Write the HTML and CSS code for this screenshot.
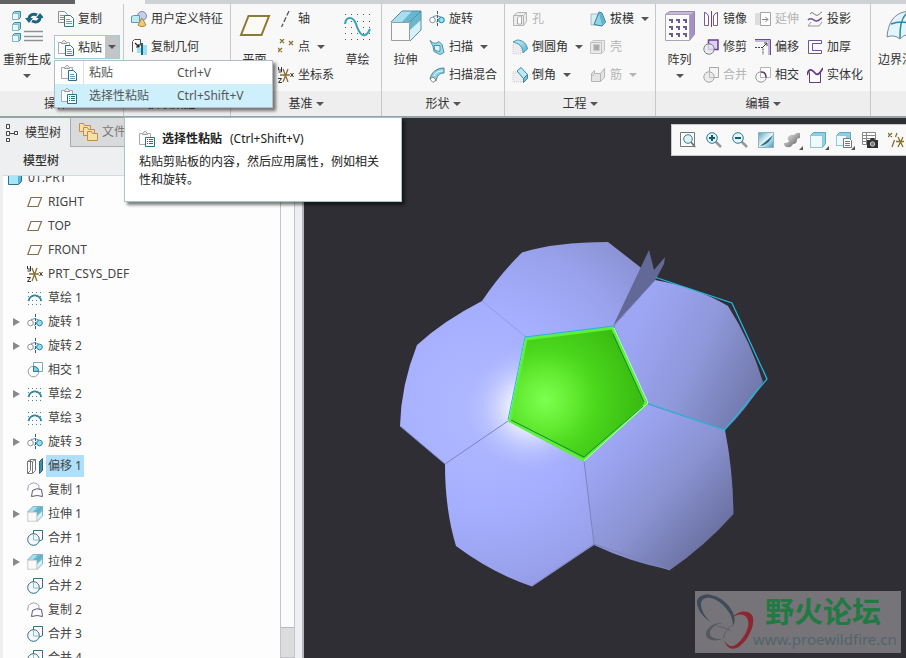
FILE: index.html
```
<!DOCTYPE html>
<html lang="zh-CN">
<head>
    <meta charset="UTF-8">
    <meta name="viewport" content="width=device-width, initial-scale=1.0">
    <title>01.PRT</title>
    <link rel="stylesheet" href="styles.css">
</head>
<body>
    <!-- icon sprite -->
    <svg class="sprite" width="0" height="0" aria-hidden="true">
        <defs>
            <linearGradient id="g-blue" x1="0" y1="0" x2="1" y2="1">
                <stop offset="0" stop-color="#d9f4fb"/>
                <stop offset="1" stop-color="#4fb0d0"/>
            </linearGradient>
            <linearGradient id="g-grey" x1="0" y1="0" x2="1" y2="1">
                <stop offset="0" stop-color="#f4f4f4"/>
                <stop offset="1" stop-color="#555"/>
            </linearGradient>
            <linearGradient id="g-repaint" x1="0" y1="0" x2="1" y2="1">
                <stop offset="0" stop-color="#4fa3bd"/>
                <stop offset=".5" stop-color="#e6f6fa"/>
                <stop offset="1" stop-color="#3d9ab8"/>
            </linearGradient>
        </defs>

        <symbol id="i-regen" viewBox="0 0 32 32">
            <g fill="#8fd4e8" stroke="#3c8ba3">
                <path d="M1.500 3.500l2-2h6v6l-2 2h-6zM1.500 14.500l2-2h6v6l-2 2h-6zM1.500 25.500l2-2h6v6l-2 2h-6z"/>
                <path fill="#e8f8fc" stroke="#7fbacd" d="M1.500 3.500h6v6h-6zM1.500 14.500h6v6h-6zM1.500 25.500h6v6h-6z"/>
            </g>
            <g fill="none" stroke="#1d6480" stroke-width="3">
                <path d="M18 9c0-4 4-6 8-4"/>
                <path d="M29 7c0 5-4 6-8 4"/>
            </g>
            <path fill="#1d6480" d="M14 8h8l-4 5zM25 8h8l-4-5z"/>
            <path stroke="#8b9296" stroke-width="1.500" d="M13 21.500h19M13 26.500h19M13 30.500h19"/>
        </symbol>
        <symbol id="i-copy" viewBox="0 0 16 16">
            <path fill="#f8f8f8" stroke="#8b8f92" d="M.5.500h6l3 3v8h-9z"/>
            <path stroke="#8b8f92" d="M2 4.500h4M2 6.500h4M2 8.500h4"/>
            <path fill="#fff" stroke="#34738c" d="M6.500 4.500h6l3 3v8h-9z"/>
            <path stroke="#5aa9c4" d="M8 8.500h4M8 10.500h6M8 12.500h6"/>
        </symbol>
        <symbol id="i-paste" viewBox="0 0 16 16">
            <path fill="#fbfbfb" stroke="#aaa" d="M.5 2.500h11v11H.5z"/>
            <path fill="#e9e9e9" stroke="#9a9a9a" d="M3.500 3.500v-1l2-2h1l2 2v1z"/>
            <path fill="#fff" stroke="#28708c" d="M7.500 5.500h5l3 3v7h-8z"/>
            <path stroke="#58a5c2" d="M9 9.500h4M9 11.500h5M9 13.500h5"/>
        </symbol>
        <symbol id="i-paste-special" viewBox="0 0 16 16">
            <path fill="#fbfbfb" stroke="#aaa" d="M.5 2.500h11v11H.5z"/>
            <path fill="#e9e9e9" stroke="#9a9a9a" d="M3.500 3.500v-1l2-2h1l2 2v1z"/>
            <path fill="#fff" stroke="#28708c" d="M6.500 6.500h9v9h-9z"/>
            <path stroke="#28708c" d="M8 8.500h1M10 8.500h4M8 10.500h1M10 10.500h4M8 12.500h1M10 12.500h4"/>
        </symbol>
        <symbol id="i-udf" viewBox="0 0 16 16">
            <circle cx="11" cy="5" r="4.500" fill="#c9cdea" stroke="#8287ab"/>
            <path fill="#bdeaf6" stroke="#5c9bb0" d="M.5 5.500l2-1h6v6l-1 1h-7z"/>
            <path fill="#eccb7d" stroke="#ae8538" d="M11 7l4 7c-2 2-6 2-8 0z"/>
        </symbol>
        <symbol id="i-copygeom" viewBox="0 0 16 16">
            <path fill="#fff" stroke="#555" d="M1.500 13V2.500l2-2h6v6"/>
            <path fill="none" stroke="#222" stroke-width="1.200" d="M4 4l4 4M8 5v3H5"/>
            <path fill="#9be1f4" d="M6 9h4v5H6zM12 6h4v10h-4z"/>
            <path stroke="#1d6480" stroke-width="2" d="M11 4v12"/>
        </symbol>
        <symbol id="i-plane-lg" viewBox="0 0 32 32">
            <path fill="#fbfaf5" stroke="#8d7a35" stroke-width="2" d="M9.500 6H30l-7.500 19H2z"/>
        </symbol>
        <symbol id="i-plane" viewBox="0 0 16 16">
            <path fill="#fff" stroke="#86703f" stroke-width="1.200" d="M4 3.500h10.500l-3.500 9H.8z"/>
        </symbol>
        <symbol id="i-axis" viewBox="0 0 16 16">
            <path stroke="#555" stroke-width="1.300" stroke-dasharray="5 2" d="M11 0L3.500 16"/>
        </symbol>
        <symbol id="i-point" viewBox="0 0 16 16">
            <path stroke="#86702f" stroke-width="1.300" d="M2 0l4 4M6 0L2 4M11 2l4 4M15 2l-4 4M0 9l4 4M4 9l-4 4"/>
        </symbol>
        <symbol id="i-csys" viewBox="0 0 16 16">
            <path fill="none" stroke="#86702f" stroke-width="1.300" d="M2 8h10M5 2l5 13M10 2L5 15"/>
            <path fill="none" stroke="#333" d="M.5 0v3h3M3.500 0v5h-3M0 11.500h3.500l-3 4H4M12.500 6l3 4M15.500 6l-3 4"/>
        </symbol>
        <symbol id="i-sketch-lg" viewBox="0 0 32 32">
            <g stroke="#555" stroke-width="1" stroke-dasharray="1 5">
                <path d="M3 4.500h28M3 11.500h28M3 17.500h28M3 23.500h28M3 29.500h28"/>
            </g>
            <path fill="none" stroke="#36a3bd" stroke-width="2" d="M3 14c1-8 8-8 11 0 3 10 9 17 14 5"/>
        </symbol>
        <symbol id="i-sketch" viewBox="0 0 16 16">
            <path stroke="#4d7da0" stroke-dasharray="1 3" d="M1 2.500h15M1 6.500h15M1 10.500h15M1 14.500h15"/>
            <path fill="none" stroke="#2e86a0" stroke-width="1.800" d="M1.500 11c2-7 10-8 13 0"/>
        </symbol>
        <symbol id="i-extrude" viewBox="0 0 32 32">
            <path fill="#69b6cf" d="M12 1h19v19L20 31V12H1z"/>
            <path fill="#a9def0" d="M12 1h10L12 12H1z"/>
            <path fill="#d6f1f8" d="M20 31V20L31 10v10z"/>
            <path fill="none" stroke="#538ea5" d="M1 12L12 1h19v19L20 31M20 12L31 1"/>
            <path fill="#fafafa" stroke="#9b9b9b" d="M1.500 12.500h18v18h-18z"/>
        </symbol>
        <symbol id="i-revolve" viewBox="0 0 16 16">
            <circle cx="3.500" cy="9" r="2.800" fill="#fff" stroke="#8b9296"/>
            <circle cx="12.500" cy="9" r="2.800" fill="#8fe0f5" stroke="#2f83a0"/>
            <path fill="none" stroke="#5b9db5" d="M4 5.500q4-2 8 .5M7 11.500q2-1 3-4"/>
            <path stroke="#2e5f86" stroke-dasharray="3 1" d="M8.500 0v16"/>
        </symbol>
        <symbol id="i-sweep" viewBox="0 0 16 16">
            <path fill="#9bdcec" stroke="#4b90a8" d="M1 1.500q5 5 9 1l3 3 2 8-4 2-6-3q0-5-4-11z"/>
            <path fill="#e3f7fb" stroke="#4b90a8" d="M5 6.500h6v6l-5-1z"/>
        </symbol>
        <symbol id="i-blend" viewBox="0 0 16 16">
            <path fill="#8fcde0" stroke="#44879e" d="M1 12C2 6 7 1 15 1v5c-5 0-7 3-8 8z"/>
            <path fill="#fff" stroke="#888" d="M1 12l3-2 3 3-3 2.500z"/>
            <path fill="none" stroke="#fff" d="M5 9c2-4 5-5 9-5"/>
        </symbol>
        <symbol id="i-hole" viewBox="0 0 16 16">
            <path fill="#ececec" stroke="#b5b5b5" d="M1.500 4.500l4-3h9v9l-3 4h-10zM1.500 4.500h10v10M11.500 4.500l3-3"/>
            <path fill="#fff" stroke="#aaa" d="M5.500 13V7l2-2h2v8z"/>
        </symbol>
        <symbol id="i-round" viewBox="0 0 16 16">
            <path fill="#ededed" stroke="#ccc" stroke-dasharray="1 1" d="M1 5h8v10H1z"/>
            <path fill="url(#g-blue)" stroke="#4d97b0" d="M1 3l4-2c6 0 10 4 10.500 9L11 14c0-6-4-10-10-11z"/>
        </symbol>
        <symbol id="i-chamfer" viewBox="0 0 16 16">
            <path fill="#ededed" stroke="#ccc" stroke-dasharray="1 1" d="M1 5h9v10H1z"/>
            <path fill="#b8ebf7" stroke="#3d87a0" d="M5 4l4-3.500 6.500 7-4 4z"/>
            <path fill="#7db9cc" stroke="#3d87a0" d="M11.500 11.500l4-4v4l-4 4z"/>
        </symbol>
        <symbol id="i-draft" viewBox="0 0 16 16">
            <path fill="#d3eef5" stroke="#abc" d="M1 3h7v11H1z"/>
            <path fill="#91d2e5" stroke="#32809b" d="M4 13.500L9 1l3 1 3.500 9-3.500 4z"/>
            <path fill="#5fb3cc" d="M9 2l3 12 3-3-3-8z"/>
        </symbol>
        <symbol id="i-shell" viewBox="0 0 16 16">
            <path fill="#e9e9e9" stroke="#c3c3c3" d="M.5 3.500l3-2h11v10l-3 3H.500zM.5 3.500h11v11"/>
            <path fill="#aaa" stroke="#ccc" d="M3.500 5.500h6v6h-6z"/>
        </symbol>
        <symbol id="i-rib" viewBox="0 0 16 16">
            <path fill="#e4e4e4" stroke="#b5b5b5" d="M1.500 14.500v-8l3-3v3h6l4-5v9l-4 4zM4.500 6.500l-3 3M10.500 6.500v8"/>
        </symbol>
        <symbol id="i-pattern" viewBox="0 0 32 32">
            <path fill="#c8b8dc" stroke="#9688ac" d="M1.500 4.500l4-3h25v23l-5 6z"/>
            <path fill="#a591c3" d="M26 5l4-3v22l-4 6z"/>
            <path fill="#fcfcfd" stroke="#aaa2b8" d="M1.500 4.500h24v26h-24z"/>
            <path fill="#6c5b91" d="M5 9h4v4H5zM12 9h4v4h-4zM19 9h4v4h-4zM5 16h4v4H5zM12 16h4v4h-4zM19 16h4v4h-4zM5 23h4v4H5zM12 23h4v4h-4zM19 23h4v4h-4z"/>
            <path fill="#fcfcfd" d="M5 11h2v2H5zM12 11h2v2h-2zM19 11h2v2h-2zM5 18h2v2H5zM12 18h2v2h-2zM19 18h2v2h-2zM5 25h2v2H5zM12 25h2v2h-2zM19 25h2v2h-2z"/>
        </symbol>
        <symbol id="i-mirror" viewBox="0 0 16 16">
            <path fill="#fff" stroke="#7c58a0" d="M1.500 1v13.500h4V5q-1-3-4-3.500M14.500 1v13.500h-4V5q1-3 4-3.500"/>
            <path stroke="#555" d="M8.500 0v16"/>
        </symbol>
        <symbol id="i-trim" viewBox="0 0 16 16">
            <path fill="#ddcff4" stroke="#64418b" stroke-width="1.500" d="M5.500 1h9.500v9.500H5.500z"/>
            <circle cx="6" cy="10" r="5.200" fill="#e8e8ee" fill-opacity=".8" stroke="#7d7d8a"/>
        </symbol>
        <symbol id="i-merge-off" viewBox="0 0 16 16">
            <path fill="#f4f4f4" stroke="#a7a7a7" d="M6.500.500h9v10h-9z"/>
            <circle cx="6" cy="10" r="5.200" fill="#ececec" stroke="#a7a7a7"/>
            <path fill="none" stroke="#bbb" d="M6.500 5v5.500H11"/>
        </symbol>
        <symbol id="i-extend" viewBox="0 0 16 16">
            <path fill="#ddd" d="M0 2h6v12H0z"/>
            <path fill="#fff" stroke="#a5a5a5" d="M5.500 1.500h10v13h-10z"/>
            <path fill="none" stroke="#888" d="M7 8.500h6M10.500 6l2.500 2.500-2.500 2.500"/>
        </symbol>
        <symbol id="i-offset" viewBox="0 0 16 16">
            <path fill="none" stroke="#c7b7df" stroke-width="2" d="M0 2h14v14"/>
            <path fill="none" stroke="#6b4b8f" d="M0 .500h15.500V16"/>
            <path fill="none" stroke="#444" stroke-dasharray="2 1" d="M0 8.500h8V16"/>
            <path fill="none" stroke="#444" d="M8 8l4-4M9 4h3v3"/>
        </symbol>
        <symbol id="i-intersect-lila" viewBox="0 0 16 16">
            <path fill="#fff" stroke="#b4b4b4" d="M5.500.500h10v10h-10z"/>
            <circle cx="6" cy="10" r="5.200" fill="none" stroke="#999"/>
            <path fill="none" stroke="#5c3d80" stroke-width="1.500" d="M6 5q5 0 5 5.500"/>
        </symbol>
        <symbol id="i-project" viewBox="0 0 16 16">
            <path fill="none" stroke="#777" d="M3 3c3-4 5 3 8 1 2-1 2-2 4-3"/>
            <path fill="none" stroke="#71529a" stroke-width="1.500" d="M1 9c4-4 6 2 9 1s3-2 5-3"/>
            <path fill="none" stroke="#999" d="M4 11l-3 4h11l3-4"/>
        </symbol>
        <symbol id="i-thicken" viewBox="0 0 16 16">
            <path fill="#fff" stroke="#71529a" d="M14.500 1.500h-13v13h13v-3h-9v-7h9z"/>
        </symbol>
        <symbol id="i-solidify" viewBox="0 0 16 16">
            <path fill="#fff" stroke="#888" d="M2.500 5v10.500h11V4"/>
            <path fill="none" stroke="#5f3d88" stroke-width="1.800" d="M0 8c1-5 4-7 7-3s5 3 9-4"/>
            <path fill="none" stroke="#5f3d88" d="M2.500 6v9.500h11V6"/>
        </symbol>
        <symbol id="i-boundary" viewBox="0 0 32 32">
            <path fill="#e2f5fa" stroke="#789" d="M1 27C2 13 8 4 18 2q10-2 14 2v24q-12-7-18 1-6-5-13-2z"/>
            <path fill="none" stroke="#2f87a3" stroke-width="1.500" d="M14 28c0-12 1-20 8-26M5 14q14-5 27 3"/>
        </symbol>

        <symbol id="i-part" viewBox="0 0 16 16">
            <path fill="#57b3d2" stroke="#2c7390" d="M1.500 4.500l3-3h10v10l-3 3h-10z"/>
            <path fill="#a5e6f8" d="M2 5h9v9H2z"/>
        </symbol>
        <symbol id="i-intersect" viewBox="0 0 16 16">
            <path fill="#fff" stroke="#7aa9bb" d="M6.500.500h9v9h-9z"/>
            <circle cx="6.500" cy="9.500" r="5.300" fill="none" stroke="#999"/>
            <path fill="#71d2ee" stroke="#2d7f9a" d="M6.500 4.500q5 0 5 5h-5z"/>
        </symbol>
        <symbol id="i-offset-tree" viewBox="0 0 16 16">
            <path fill="#fff" stroke="#777" d="M.5 3.500l3-2v11l-3 3zM3.500 1.500h5v11l-3 3h-5M5.500 4v11M.5 3.500h5l3-2"/>
            <path fill="#3992ad" stroke="#2a6578" d="M12.500 3.500l3-3v12l-3 3z"/>
        </symbol>
        <symbol id="i-copysurf" viewBox="0 0 16 16">
            <path fill="#fff" stroke="#a99bb5" d="M.5 8.500l1-5q5-5 10-.5l1 5"/>
            <path fill="#fff" stroke="#66507d" d="M4.500 14.500l1-6q4-3 9-1l1 7q-5-2-11 0z"/>
        </symbol>
        <symbol id="i-merge" viewBox="0 0 16 16">
            <path fill="#fff" stroke="#2e6e86" d="M6.500.500h9v9l-3 1.500h-6z"/>
            <circle cx="6.500" cy="9.500" r="5.800" fill="#f1fbfe" stroke="#2e6e86"/>
            <path fill="none" stroke="#9bb8c4" d="M6.500 4v6H12"/>
        </symbol>
        <symbol id="i-tree" viewBox="0 0 14 20">
            <path fill="#fff" stroke="#444" d="M1.500 1.500h3v4h-3zM1.500 8.500h3v4h-3zM1.500 15.500h3v3h-3zM9.500 8.500h3v3h-3zM5 10.500h4"/>
        </symbol>
        <symbol id="i-folders" viewBox="0 0 20 20">
            <g fill="#f7dfa5" stroke="#c09140">
                <path d="M.5 9.500v-8h4l1 2h6v6z"/>
                <path d="M4.500 13.500v-8h4l1 2h6v6z"/>
                <path d="M8.500 18.500v-9h4l1 2h5v7z"/>
            </g>
        </symbol>

        <symbol id="i-refit" viewBox="0 0 16 16">
            <path fill="#fff" stroke="#777" d="M.5.500h14v14H.5z"/>
            <circle cx="8" cy="7" r="4.300" fill="#dff3f9" stroke="#387a93"/>
            <path stroke="#777" stroke-width="2" d="M11 10l4 5"/>
        </symbol>
        <symbol id="i-zoomin" viewBox="0 0 16 16">
            <path stroke="#999" stroke-width="2.500" d="M9 9l6 6"/>
            <circle cx="6" cy="6" r="5.300" fill="#e3f6fb" stroke="#287a95"/>
            <path stroke="#125a75" stroke-width="2" d="M3 6h6M6 3v6"/>
        </symbol>
        <symbol id="i-zoomout" viewBox="0 0 16 16">
            <path stroke="#999" stroke-width="2.500" d="M9 9l6 6"/>
            <circle cx="6" cy="6" r="5.300" fill="#e3f6fb" stroke="#287a95"/>
            <path stroke="#125a75" stroke-width="2" d="M3 6h6"/>
        </symbol>
        <symbol id="i-repaint" viewBox="0 0 16 16">
            <path fill="url(#g-repaint)" stroke="#8fb3bf" d="M.5.500h15v15H.5z"/>
            <path fill="#256f88" d="M2 14Q11 13 15 3q-4 4-13 11z"/>
        </symbol>
        <symbol id="i-shade" viewBox="0 0 16 16">
            <path fill="url(#g-grey)" d="M0 11q4 0 5-2-3-3 0-5t5-1q3-3 6-2v5q-3 0-3 2 0 4-4 4-2 4-6 3-3 0-3-4z"/>
        </symbol>
        <symbol id="i-cube" viewBox="0 0 16 16">
            <path fill="#8dcfe3" stroke="#5fa9c0" d="M.5 3.500l3-3h12v11l-3 4H.500z"/>
            <path fill="#eefafd" stroke="#8ccadb" d="M.5 3.500h12v12H.5z"/>
        </symbol>
        <symbol id="i-cubelist" viewBox="0 0 16 16">
            <path fill="#8dcfe3" stroke="#5fa9c0" d="M.5 3.500l3-3h11v10l-3 3H.500z"/>
            <path fill="#eefafd" stroke="#8ccadb" d="M.5 3.500h10v10H.5z"/>
            <path fill="#fff" stroke="#777" d="M7.500 6.500h6l2 2v7h-8zM9 9.500h5M9 11.500h5M9 13.500h5"/>
        </symbol>
        <symbol id="i-camera" viewBox="0 0 16 16">
            <path fill="#fff" stroke="#888" d="M.5.500h13v12H.5zM.5 3.500h13M.5 6.500h13M.5 9.500h13M4.500.500v12"/>
            <path fill="#333" d="M5 8h3l1-2h3l1 2h3v8H5z"/>
            <circle cx="10.500" cy="12" r="2.200" fill="#777" stroke="#ccc"/>
        </symbol>
        <symbol id="i-datum" viewBox="0 0 16 16">
            <path stroke="#86702f" stroke-width="1.300" d="M0 1l4 4M4 1L0 5M9 1L7.500 5M6.500 8L4 15M8 9.500h8M10 5l5 10M15 5l-5 10"/>
        </symbol>
    </svg>

    <header class="ribbon">
        <div class="ribbon-tabs"><span class="tab-dark"></span><span class="tab-active"></span></div>
        <div class="groups">
            <section class="group">
                <div class="tools">
                    <button class="big wide"><svg><use href="#i-regen"/></svg>重新生成<i class="caret"></i></button>
                    <div class="col">
                        <button class="tool inset"><svg><use href="#i-copy"/></svg>复制</button>
                        <div class="split">
                            <button class="tool"><svg><use href="#i-paste"/></svg>粘贴</button>
                            <button class="drop" aria-label="粘贴选项"><i class="caret"></i></button>
                            <div class="menu" role="menu">
                                <button role="menuitem"><svg><use href="#i-paste"/></svg><span>粘贴</span><kbd>Ctrl+V</kbd></button>
                                <button role="menuitem" class="active"><svg><use href="#i-paste-special"/></svg><span>选择性粘贴</span><kbd>Ctrl+Shift+V</kbd></button>
                            </div>
                        </div>
                    </div>
                </div>
                <button class="group-label">操作<i class="caret"></i></button>
            </section>

            <section class="group">
                <div class="tools pad">
                    <div class="col">
                        <button class="tool"><svg><use href="#i-udf"/></svg>用户定义特征</button>
                        <button class="tool"><svg><use href="#i-copygeom"/></svg>复制几何</button>
                    </div>
                </div>
                <button class="group-label">获取数据<i class="caret"></i></button>
            </section>

            <section class="group">
                <div class="tools">
                    <button class="big"><svg><use href="#i-plane-lg"/></svg>平面</button>
                    <div class="col grow">
                        <button class="tool"><svg><use href="#i-axis"/></svg>轴</button>
                        <button class="tool"><svg><use href="#i-point"/></svg>点<i class="caret"></i></button>
                        <button class="tool"><svg><use href="#i-csys"/></svg>坐标系</button>
                    </div>
                    <button class="big"><svg><use href="#i-sketch-lg"/></svg>草绘</button>
                </div>
                <button class="group-label">基准<i class="caret"></i></button>
            </section>

            <section class="group">
                <div class="tools">
                    <button class="big"><svg><use href="#i-extrude"/></svg>拉伸</button>
                    <div class="col">
                        <button class="tool"><svg><use href="#i-revolve"/></svg>旋转</button>
                        <button class="tool"><svg><use href="#i-sweep"/></svg>扫描<i class="caret"></i></button>
                        <button class="tool"><svg><use href="#i-blend"/></svg>扫描混合</button>
                    </div>
                </div>
                <button class="group-label">形状<i class="caret"></i></button>
            </section>

            <section class="group">
                <div class="tools pad even">
                    <div class="col">
                        <button class="tool" disabled><svg><use href="#i-hole"/></svg>孔</button>
                        <button class="tool"><svg><use href="#i-round"/></svg>倒圆角<i class="caret"></i></button>
                        <button class="tool"><svg><use href="#i-chamfer"/></svg>倒角<i class="caret"></i></button>
                    </div>
                    <div class="col">
                        <button class="tool"><svg><use href="#i-draft"/></svg>拔模<i class="caret"></i></button>
                        <button class="tool" disabled><svg><use href="#i-shell"/></svg>壳</button>
                        <button class="tool" disabled><svg><use href="#i-rib"/></svg>筋<i class="caret"></i></button>
                    </div>
                </div>
                <button class="group-label">工程<i class="caret"></i></button>
            </section>

            <section class="group">
                <div class="tools edit">
                    <button class="big"><svg><use href="#i-pattern"/></svg>阵列<i class="caret"></i></button>
                    <div class="col">
                        <button class="tool"><svg><use href="#i-mirror"/></svg>镜像</button>
                        <button class="tool"><svg><use href="#i-trim"/></svg>修剪</button>
                        <button class="tool" disabled><svg><use href="#i-merge-off"/></svg>合并</button>
                    </div>
                    <div class="col">
                        <button class="tool" disabled><svg><use href="#i-extend"/></svg>延伸</button>
                        <button class="tool"><svg><use href="#i-offset"/></svg>偏移</button>
                        <button class="tool"><svg><use href="#i-intersect-lila"/></svg>相交</button>
                    </div>
                    <div class="col">
                        <button class="tool"><svg><use href="#i-project"/></svg>投影</button>
                        <button class="tool"><svg><use href="#i-thicken"/></svg>加厚</button>
                        <button class="tool"><svg><use href="#i-solidify"/></svg>实体化</button>
                    </div>
                </div>
                <button class="group-label">编辑<i class="caret"></i></button>
            </section>

            <section class="group last">
                <div class="tools pad">
                    <button class="big natural"><svg><use href="#i-boundary"/></svg>边界混合</button>
                </div>
                <div class="group-label"></div>
            </section>
        </div>
    </header>

    <main class="workspace">
        <aside class="sidebar">
            <nav class="side-tabs">
                <button class="side-tab current"><svg class="tree-icon"><use href="#i-tree"/></svg>模型树</button>
                <button class="side-tab"><svg class="folders"><use href="#i-folders"/></svg>文件夹浏览器</button>
            </nav>
            <h2 class="side-title">模型树</h2>
            <div class="tree-box">
                <ul class="tree">
                    <li class="root"><svg><use href="#i-part"/></svg><span>01.PRT</span></li>
                    <li><svg><use href="#i-plane"/></svg><span>RIGHT</span></li>
                    <li><svg><use href="#i-plane"/></svg><span>TOP</span></li>
                    <li><svg><use href="#i-plane"/></svg><span>FRONT</span></li>
                    <li><svg><use href="#i-csys"/></svg><span>PRT_CSYS_DEF</span></li>
                    <li><svg><use href="#i-sketch"/></svg><span>草绘 1</span></li>
                    <li class="parent"><svg><use href="#i-revolve"/></svg><span>旋转 1</span></li>
                    <li class="parent"><svg><use href="#i-revolve"/></svg><span>旋转 2</span></li>
                    <li><svg><use href="#i-intersect"/></svg><span>相交 1</span></li>
                    <li class="parent"><svg><use href="#i-sketch"/></svg><span>草绘 2</span></li>
                    <li><svg><use href="#i-sketch"/></svg><span>草绘 3</span></li>
                    <li class="parent"><svg><use href="#i-revolve"/></svg><span>旋转 3</span></li>
                    <li class="selected"><svg><use href="#i-offset-tree"/></svg><span>偏移 1</span></li>
                    <li><svg><use href="#i-copysurf"/></svg><span>复制 1</span></li>
                    <li class="parent"><svg><use href="#i-extrude"/></svg><span>拉伸 1</span></li>
                    <li><svg><use href="#i-merge"/></svg><span>合并 1</span></li>
                    <li class="parent"><svg><use href="#i-extrude"/></svg><span>拉伸 2</span></li>
                    <li><svg><use href="#i-merge"/></svg><span>合并 2</span></li>
                    <li><svg><use href="#i-copysurf"/></svg><span>复制 2</span></li>
                    <li><svg><use href="#i-merge"/></svg><span>合并 3</span></li>
                    <li><svg><use href="#i-merge"/></svg><span>合并 4</span></li>
                </ul>
                <div class="scrollbar"><div class="thumb"></div></div>
            </div>
        </aside>

        <section class="viewport">
            <svg class="model" viewBox="304 118 602 540" preserveAspectRatio="xMinYMin meet" aria-label="模型">
                <defs>
                    <radialGradient id="m-body" gradientUnits="userSpaceOnUse" cx="480" cy="410" r="330">
                        <stop offset="0" stop-color="#b0baff"/>
                        <stop offset=".3" stop-color="#a5afff"/>
                        <stop offset=".5" stop-color="#99a2ec"/>
                        <stop offset=".75" stop-color="#8289c4"/>
                        <stop offset="1" stop-color="#656b9c"/>
                    </radialGradient>
                    <linearGradient id="m-right" gradientUnits="userSpaceOnUse" x1="630" y1="335" x2="755" y2="395">
                        <stop offset="0" stop-color="#9da6f4"/>
                        <stop offset=".5" stop-color="#8f98da"/>
                        <stop offset="1" stop-color="#7279ac"/>
                    </linearGradient>
                    <linearGradient id="m-low" gradientUnits="userSpaceOnUse" x1="600" y1="440" x2="725" y2="550">
                        <stop offset="0" stop-color="#9fa9f8"/>
                        <stop offset=".5" stop-color="#8b93d2"/>
                        <stop offset="1" stop-color="#636995"/>
                    </linearGradient>
                    <radialGradient id="m-glow" gradientUnits="userSpaceOnUse" cx="530" cy="408" r="64">
                        <stop offset=".2" stop-color="#fff"/>
                        <stop offset="1" stop-color="#b4bdff" stop-opacity="0"/>
                    </radialGradient>
                    <radialGradient id="m-green" gradientUnits="userSpaceOnUse" cx="545" cy="400" r="100">
                        <stop offset="0" stop-color="#7dff50"/>
                        <stop offset=".25" stop-color="#66ee35"/>
                        <stop offset=".5" stop-color="#4bd81d"/>
                        <stop offset="1" stop-color="#38b90f"/>
                    </radialGradient>
                </defs>
                <path fill="url(#m-body)" d="M482 301Q500 274 522 252.500Q555 242 608 242L640 267L655 280L614 326L647 404L594 545L532 586.500Q492 573 456 546Q445 510 445 464L400 426Q401 385 417 345Q443 321 482 301z"/>
                <path fill="url(#m-right)" d="M614 326L655 280Q696 287 728 306Q751 342 763 382Q746 410 725 430L647 404z"/>
                <path fill="url(#m-low)" d="M584 461L647 404L725 430Q733 470 733.500 514Q705 546 670 570Q630 562 594 545z"/>
                <circle cx="530" cy="408" r="64" fill="url(#m-glow)"/>
                <g fill="none" stroke="#7c84bf">
                    <path stroke="#939ce0" d="M482 301L526 337"/>
                    <path d="M508 421L445 464L400 426"/>
                    <path d="M584 461L594 544L670 570"/>
                    <path d="M594 544L532 586"/>
                </g>
                <path fill="#626996" d="M613 326L649 250L654 270L665 257L664 264L656 279z"/>
                <path fill="none" stroke="#22b8dc" stroke-width="1.300" d="M656 277.500L732 303L767 379L724.500 430L647 403"/>
                <path fill="url(#m-green)" stroke="#5cf03a" stroke-width="3" d="M526 339L612.500 328L646 404L583.500 460L510 421z"/>
                <path fill="none" stroke="#1b8240" d="M613 334L644 402M643 406L584 457L511 420"/>
                <path fill="none" stroke="#b7ffd0" d="M508.500 418L525 338M614 328L648 403L584 461"/>
                <path fill="none" stroke="#23b5dc" d="M508 420L525 337L614 326"/>
            </svg>

            <div class="view-toolbar">
                <button aria-label="重新调整"><svg><use href="#i-refit"/></svg></button>
                <button aria-label="放大"><svg><use href="#i-zoomin"/></svg></button>
                <button aria-label="缩小"><svg><use href="#i-zoomout"/></svg></button>
                <button aria-label="重画"><svg><use href="#i-repaint"/></svg></button>
                <button class="more" aria-label="着色"><svg><use href="#i-shade"/></svg></button>
                <button class="more" aria-label="显示样式"><svg><use href="#i-cube"/></svg></button>
                <button class="more" aria-label="已命名视图"><svg><use href="#i-cubelist"/></svg></button>
                <button aria-label="视图管理器"><svg><use href="#i-camera"/></svg></button>
                <button aria-label="基准显示"><svg><use href="#i-datum"/></svg></button>
            </div>

            <div class="watermark">
                <svg viewBox="0 0 60 62">
                    <path fill="#3d4b5a" d="M16 31C7 26 1 16 2 10 4 3 12 2 20 5 33 10 44 25 38 35 39 25 29 12 19 8 11 5 6 8 6 13 6 19 10 26 16 31z"/>
                    <path fill="#8c2630" d="M37 27C42 20 52 18 57 24 61 31 55 47 45 55 38 60 32 58 29 49 33 56 38 57 43 52 51 45 56 33 52 27 48 22 42 23 37 27z"/>
                    <path fill="#555a60" d="M28 32C18 31 10 38 11 44 12 49 19 51 27 48 19 48 15 46 15 42 15 37 21 33 28 32z"/>
                    <path fill="none" stroke="#5d6066" d="M38 34q-8 4-10 14M22 35q8 1 14 5"/>
                </svg>
                <div class="brand">
                    <strong>野火论坛</strong>
                    <span>www.proewildfire.cn</span>
                </div>
            </div>
        </section>
    </main>

    <div class="tooltip" role="tooltip">
        <p class="tip-title"><svg><use href="#i-paste-special"/></svg><strong>选择性粘贴</strong>(Ctrl+Shift+V)</p>
        <p>粘贴剪贴板的内容，然后应用属性，例如相关性和旋转。</p>
    </div>
</body>
</html>
```
FILE: styles.css
```
* {
    box-sizing: border-box;
}
body {
    font-family: "Noto Sans", "Noto Sans CJK SC", sans-serif;
    font-size: 12px;
    line-height: 18px;
    color: #333;
    background: #eeeff0;
    margin: 0;
    height: 100vh;
    display: flex;
    flex-direction: column;
    position: relative;
    overflow: hidden;
}
button {
    font: inherit;
    color: inherit;
    background: none;
    border: none;
    padding: 0;
    white-space: nowrap;
}
svg {
    flex: none;
    width: 16px;
    height: 16px;
}
.sprite {
    position: absolute;
    width: 0;
    height: 0;
}
.caret {
    flex: none;
    border: 4px solid transparent;
    border-top-color: #555;
    border-bottom: 0;
}

/* ribbon */
.ribbon {
    flex: none;
    background: #f8f8f8;
    border-bottom: 2px solid #93a3a6;
}
.ribbon-tabs {
    display: flex;
    height: 4px;
    background: #cfd2d5;
}
.tab-dark {
    width: 75px;
    background: #636363;
}
.tab-active {
    width: 70px;
    background: #f8f8f8;
}
.groups {
    display: grid;
    grid-template-columns: 124px 107px 151px 123px 151px 215px 1fr;
}
.group {
    min-width: 0;
    border-right: 1px solid #c6c8ca;
}
.group.last {
    border-right: 0;
    overflow: hidden;
}
.tools {
    display: flex;
    height: 87px;
}
.tools.pad {
    padding-left: 7px;
}
.tools.even .col {
    width: 78px;
}
.tools.edit .col {
    width: 52px;
}
.col {
    display: flex;
    flex: none;
    flex-direction: column;
    align-items: flex-start;
    padding-top: 1px;
}
.col.grow {
    flex: 1;
}
.big {
    display: flex;
    flex-direction: column;
    align-items: center;
    flex: none;
    width: 47px;
    padding-top: 6px;
}
.big.wide {
    width: 54px;
}
.big.natural {
    width: auto;
}
.big svg {
    width: 32px;
    height: 32px;
    margin-bottom: 9px;
}
.big .caret {
    margin-top: 5px;
}
.tool {
    display: flex;
    align-items: center;
    gap: 4px;
    height: 28px;
}
.tool.inset {
    margin-left: 4px;
}
.tool .caret {
    margin-left: 3px;
}
.tool:disabled {
    color: #b4b4b4;
}
.tool:disabled .caret {
    border-top-color: #b4b4b4;
}
.group-label {
    display: flex;
    align-items: center;
    justify-content: center;
    gap: 3px;
    width: 100%;
    height: 25px;
    background: #eeeeef;
}

/* paste split button with its menu */
.split {
    position: relative;
    display: flex;
    height: 24px;
    margin-top: 2px;
    border: 1px solid #9bcddd;
    background: #fff;
}
.split .tool {
    height: 24px;
    padding: 0 3px;
}
.drop {
    display: flex;
    align-items: center;
    justify-content: center;
    width: 14px;
    background: #c3c5c7;
}
.menu {
    position: absolute;
    top: 24px;
    left: -1px;
    z-index: 5;
    width: 219px;
    background: #fff;
    border: 1px solid #b5bfc3;
    box-shadow: 3px 3px 3px rgba(0, 0, 0, 0.5);
}
.menu button {
    display: grid;
    grid-template-columns: 28px 94px auto;
    align-items: center;
    width: 100%;
    height: 23px;
    color: #555;
    text-align: left;
}
.menu svg {
    margin-left: 6px;
}
.menu span {
    border-left: 1px solid #dde3e5;
    padding-left: 5px;
    line-height: 23px;
}
.menu .active {
    background: #cdf0fc;
}
.menu .active span {
    border-color: transparent;
}
kbd {
    font: inherit;
}

/* sidebar */
.workspace {
    flex: 1;
    display: flex;
    min-height: 0;
}
.sidebar {
    flex: none;
    display: flex;
    flex-direction: column;
    width: 304px;
    padding: 0 7px 0 3px;
    background: #eeeff0;
    border-right: 2px solid #b4b5bd;
}
.side-tabs {
    display: flex;
    height: 29px;
    margin: 0 -7px 0 -3px;
}
.side-tab {
    flex: 1;
    display: flex;
    align-items: center;
    gap: 3px;
    padding-left: 8px;
    color: #777;
    background: #d9dadb;
    border: 1px solid #aaacae;
    border-top: 0;
    overflow: hidden;
}
.side-tab.current {
    flex: none;
    width: 70px;
    gap: 6px;
    padding-left: 5px;
    color: #333;
    background: none;
    border: 0;
}
.side-tab .tree-icon {
    width: 14px;
    height: 20px;
}
.side-tab .folders {
    width: 20px;
    height: 20px;
}
.side-title {
    margin: 5px 0 5px 20px;
    font-size: 12px;
    font-weight: 500;
}
.tree-box {
    flex: 1;
    display: flex;
    min-height: 0;
    overflow: hidden;
    background: #fdfdfd;
    border-top: 1px solid #d5dcde;
}
.tree {
    flex: 1;
    list-style: none;
    margin: -10px 0 0;
    padding: 0;
    color: #444;
}
.tree li {
    display: flex;
    align-items: center;
    height: 24px;
    padding-left: 10px;
}
.tree li::before {
    content: "";
    flex: none;
    margin-right: 7px;
    border: 4px solid transparent;
    border-right: 0;
    border-left-width: 7px;
}
.tree .parent::before {
    border-left-color: #888;
}
.tree .root {
    padding-left: 4px;
}
.tree .root::before {
    display: none;
}
.tree span {
    margin-left: 3px;
    padding: 2px;
}
.tree .selected span {
    background: #aee0fb;
}
.scrollbar {
    width: 15px;
    background: #dcdcde;
    border: 1px solid #c4c4c8;
}
.thumb {
    height: 94%;
    background: #fbfbfd;
    border-bottom: 1px solid #b9b9bd;
}

/* graphics area */
.viewport {
    flex: 1;
    position: relative;
    min-width: 0;
    overflow: hidden;
    background: #2f2e35;
}
.model {
    display: block;
    width: 100%;
    height: 100%;
}
.view-toolbar {
    position: absolute;
    top: 6px;
    right: 0;
    display: flex;
    align-items: center;
    gap: 10px;
    width: 235px;
    height: 32px;
    padding-left: 8px;
    overflow: hidden;
    background: #f9f9f9;
    border: 1px solid #c8c8cc;
    border-right: 0;
}
.view-toolbar button {
    position: relative;
    display: flex;
}
.view-toolbar .more::after {
    content: "";
    position: absolute;
    right: -3px;
    bottom: -2px;
    border: 2px solid #555;
    border-top-color: transparent;
    border-left-color: transparent;
}
.watermark {
    position: absolute;
    right: 5px;
    bottom: 5px;
    display: flex;
    width: 206px;
    height: 62px;
    background: #767479;
}
.watermark svg {
    width: 60px;
    height: 62px;
}
.brand {
    display: flex;
    flex-direction: column;
    margin-left: -2px;
    color: #50656a;
    font-size: 15px;
}
.brand strong {
    margin: 3px 0 0 12px;
    color: #207a42;
    font-size: 29px;
    line-height: 36px;
    font-weight: 700;
}

/* tooltip over the ribbon and tree */
.tooltip {
    position: absolute;
    top: 117px;
    left: 124px;
    z-index: 4;
    width: 278px;
    padding: 12px 20px 12px 14px;
    color: #222;
    background: #fff;
    border: 1px solid #a9c3cb;
    box-shadow: 3px 3px 3px rgba(0, 0, 0, 0.5);
}
.tooltip p {
    margin: 0;
}
.tooltip .tip-title {
    display: flex;
    align-items: center;
    margin-bottom: 5px;
}
.tip-title strong {
    margin: 0 8px 0 7px;
}
```
